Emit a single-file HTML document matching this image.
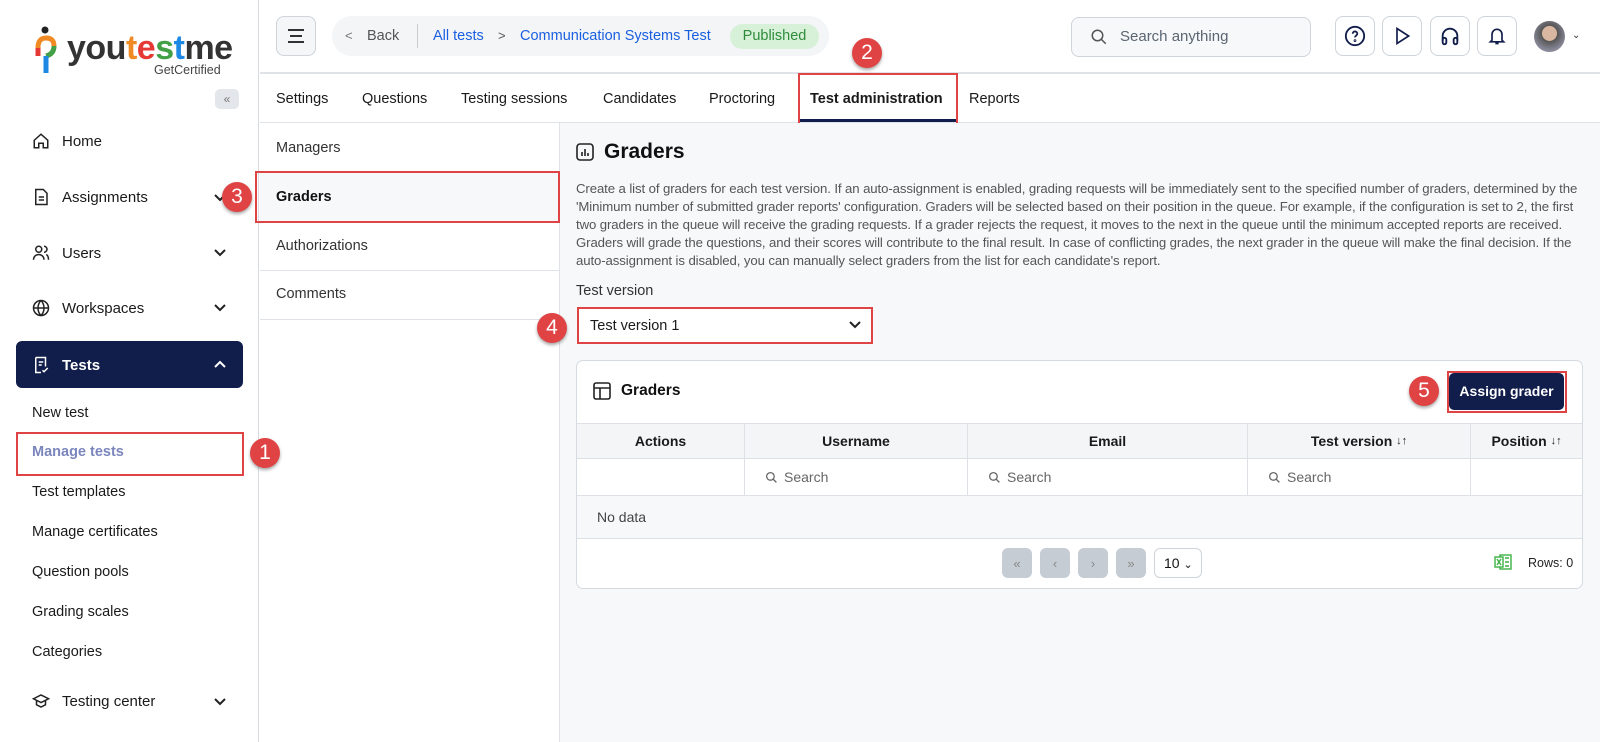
<!DOCTYPE html>
<html><head><meta charset="utf-8"><style>
*{box-sizing:border-box;margin:0;padding:0}
body{width:1600px;height:742px;overflow:hidden;font-family:"Liberation Sans",sans-serif;color:#111;background:#fff;position:relative}
.abs{position:absolute}
.side{left:0;top:0;width:259px;height:742px;border-right:1px solid #d8dce2;background:#fff}
.mi{position:absolute;left:32px;font-size:15px;color:#1a1a1a;display:flex;align-items:center}
.mi svg{margin-right:12px}
.chev{position:absolute;left:212px}
.sub{position:absolute;left:32px;font-size:14.5px;color:#1a1a1a}
.badge{position:absolute;width:30px;height:30px;border-radius:50%;background:#e04343;color:#fff;font-size:21px;text-align:center;line-height:30px;box-shadow:0 2px 3px rgba(0,0,0,.35)}
.red{position:absolute;border:2px solid #e04343}
.ibtn{position:absolute;top:16px;width:40px;height:40px;border:1px solid #cfd4da;border-radius:8px;display:flex;align-items:center;justify-content:center;background:#fff}
.tab{position:absolute;top:91px;font-size:14.5px;color:#1a1a1a}
.sm{position:absolute;left:276px;font-size:14.5px;color:#333}
.desc{position:absolute;left:576px;top:180px;font-size:13.2px;color:#555;line-height:18px;white-space:nowrap;letter-spacing:-.1px}
.th{position:absolute;top:423px;height:36px;border-right:1px solid #dde1e6;font-size:14px;font-weight:bold;display:flex;align-items:center;justify-content:center;color:#1a1a1a}
.fs{position:absolute;top:459px;height:36px;border-right:1px solid #dde1e6;font-size:14px;color:#666;display:flex;align-items:center;padding-left:20px}
.fs svg{margin-right:6px}
.pb{position:absolute;top:548px;width:30px;height:30px;border-radius:6px;background:#c5ccd4;color:#888;font-size:13px;display:flex;align-items:center;justify-content:center}
</style></head><body>

<div class="abs side"></div>
<svg class="abs" style="left:34px;top:26px" width="30" height="52" viewBox="0 0 30 52"><circle cx="11" cy="4" r="3.5" fill="#222"/><path d="M4 22 Q4 12 12 12 Q20 12 20 20" stroke="#f08a24" stroke-width="5" fill="none"/><path d="M4 22 L4 30" stroke="#e53935" stroke-width="5"/><path d="M20 20 Q20 28 12 30" stroke="#43a047" stroke-width="5" fill="none"/><path d="M12 30 L12 47" stroke="#1e88e5" stroke-width="5"/></svg>
<div class="abs" style="left:67px;top:28px;font-size:34px;font-weight:bold;letter-spacing:-.5px;color:#333;line-height:40px">you<span style="color:#f08a24">t</span><span style="color:#e53935">e</span><span style="color:#43a047">s</span><span style="color:#1e88e5">t</span>me</div>
<div class="abs" style="left:154px;top:63px;font-size:12.5px;color:#444">GetCertified</div>
<div class="abs" style="left:215px;top:89px;width:24px;height:20px;background:#e3e6ea;border-radius:5px;color:#777;font-size:12px;text-align:center;line-height:20px">«</div>

<div class="mi" style="top:132px"><svg width="18" height="18" viewBox="0 0 24 24" fill="none" stroke="#222" stroke-width="2"><path d="M3 11l9-8 9 8v10h-6v-6H9v6H3z"/></svg>Home</div>
<div class="mi" style="top:188px"><svg width="18" height="18" viewBox="0 0 24 24" fill="none" stroke="#222" stroke-width="2"><path d="M5 2h10l5 5v15H5z M9 12h7 M9 16h7"/></svg>Assignments</div>
<div class="mi" style="top:244px"><svg width="18" height="18" viewBox="0 0 24 24" fill="none" stroke="#222" stroke-width="2"><circle cx="9" cy="7" r="4"/><path d="M2 21c0-4 3-7 7-7s7 3 7 7 M16 3a4 4 0 010 8 M19 14c2 1 3 4 3 7"/></svg>Users</div>
<div class="chev" style="top:244px"><svg width="16" height="16" viewBox="0 0 16 16" fill="none" stroke="#222" stroke-width="2"><path d="M3 6l5 5 5-5"/></svg></div>
<div class="mi" style="top:299px"><svg width="18" height="18" viewBox="0 0 24 24" fill="none" stroke="#222" stroke-width="2"><circle cx="12" cy="12" r="10"/><path d="M2 12h20 M12 2c3 3 4 7 4 10s-1 7-4 10c-3-3-4-7-4-10s1-7 4-10"/></svg>Workspaces</div>
<div class="chev" style="top:299px"><svg width="16" height="16" viewBox="0 0 16 16" fill="none" stroke="#222" stroke-width="2"><path d="M3 6l5 5 5-5"/></svg></div>
<div class="abs" style="left:16px;top:341px;width:227px;height:47px;background:#111d4a;border-radius:6px"></div>
<div class="mi" style="top:356px;color:#fff;font-weight:bold"><svg width="18" height="18" viewBox="0 0 24 24" fill="none" stroke="#fff" stroke-width="2"><path d="M5 2h13v12 M5 2v20h7 M9 8h6 M9 12h4 M14 19l2 2 5-5"/></svg>Tests</div>
<div class="chev" style="top:356px"><svg width="16" height="16" viewBox="0 0 16 16" fill="none" stroke="#fff" stroke-width="2"><path d="M3 11l5-5 5 5"/></svg></div>
<div class="sub" style="top:405px">New test</div>
<div class="sub" style="top:444px;color:#7b86bd;font-weight:bold">Manage tests</div>
<div class="red" style="left:16px;top:432px;width:228px;height:44px"></div>
<div class="sub" style="top:484px">Test templates</div>
<div class="sub" style="top:524px">Manage certificates</div>
<div class="sub" style="top:564px">Question pools</div>
<div class="sub" style="top:604px">Grading scales</div>
<div class="sub" style="top:644px">Categories</div>
<div class="mi" style="top:692px"><svg width="18" height="18" viewBox="0 0 24 24" fill="none" stroke="#222" stroke-width="2"><path d="M2 9l10-5 10 5-10 5z M6 11v6l6 3 6-3v-6"/></svg>Testing center</div>
<div class="chev" style="top:693px"><svg width="16" height="16" viewBox="0 0 16 16" fill="none" stroke="#222" stroke-width="2"><path d="M3 6l5 5 5-5"/></svg></div>
<div class="chev" style="top:189px"><svg width="16" height="16" viewBox="0 0 16 16" fill="none" stroke="#222" stroke-width="2"><path d="M3 6l5 5 5-5"/></svg></div>

<div class="abs" style="left:260px;top:72px;width:1340px;height:2px;background:#dfe3e8"></div>
<div class="ibtn" style="left:276px;background:#f5f6f8"><svg width="20" height="16" viewBox="0 0 20 16" stroke="#333" stroke-width="2"><path d="M2 2h16 M4 8h12 M2 14h16"/></svg></div>
<div class="abs" style="left:332px;top:16px;width:497px;height:40px;border-radius:20px;background:#f3f5f7"></div>
<div class="abs" style="left:345px;top:28px;font-size:13px;color:#777">&lt;</div>
<div class="abs" style="left:367px;top:28px;font-size:14.5px;color:#555">Back</div>
<div class="abs" style="left:417px;top:24px;width:1px;height:24px;background:#ccc"></div>
<div class="abs" style="left:433px;top:28px;font-size:14.5px;color:#1a5fe0">All tests</div>
<div class="abs" style="left:498px;top:28px;font-size:13px;color:#555">&gt;</div>
<div class="abs" style="left:520px;top:28px;font-size:14.5px;color:#1a5fe0">Communication Systems Test</div>
<div class="abs" style="left:730px;top:24px;width:89px;height:25px;border-radius:13px;background:#d7f1d9;color:#2e8b3b;font-size:14.5px;text-align:center;line-height:25px">Published</div>
<div class="abs" style="left:1071px;top:17px;width:240px;height:40px;border:1px solid #cfd4da;border-radius:8px;background:#f7f8fa"></div>
<svg class="abs" style="left:1090px;top:28px" width="18" height="18" viewBox="0 0 24 24" fill="none" stroke="#555" stroke-width="2"><circle cx="10" cy="10" r="7"/><path d="M15 15l6 6"/></svg>
<div class="abs" style="left:1120px;top:28px;font-size:15px;color:#5a6572">Search anything</div>
<div class="ibtn" style="left:1335px"><svg width="22" height="22" viewBox="0 0 24 24" fill="none" stroke="#111d4a" stroke-width="2"><circle cx="12" cy="12" r="10"/><path d="M9.5 9.5a2.5 2.5 0 115 0c0 2-2.5 2-2.5 4"/><circle cx="12" cy="17" r=".5"/></svg></div>
<div class="ibtn" style="left:1382px"><svg width="20" height="22" viewBox="0 0 24 24" fill="none" stroke="#111d4a" stroke-width="2"><path d="M6 3l14 9-14 9z"/></svg></div>
<div class="ibtn" style="left:1430px"><svg width="22" height="22" viewBox="0 0 24 24" fill="none" stroke="#111d4a" stroke-width="2"><path d="M4 17v-5a8 8 0 0116 0v5"/><rect x="4" y="14" width="4" height="7" rx="2"/><rect x="16" y="14" width="4" height="7" rx="2"/></svg></div>
<div class="ibtn" style="left:1477px"><svg width="20" height="22" viewBox="0 0 24 24" fill="none" stroke="#111d4a" stroke-width="2"><path d="M6 17V10a6 6 0 0112 0v7l2 2H4z M10 21h4"/></svg></div>
<div class="abs" style="left:1534px;top:21px;width:31px;height:31px;border-radius:50%;background:radial-gradient(circle at 50% 40%,#d9b7a0 0 30%,#555 32%,#889 70%)"></div>
<div class="abs" style="left:1572px;top:30px;font-size:10px;color:#333">⌄</div>

<div class="abs" style="left:260px;top:122px;width:1340px;height:1px;background:#dfe3e8"></div>
<div class="tab" style="left:276px">Settings</div>
<div class="tab" style="left:362px">Questions</div>
<div class="tab" style="left:461px">Testing sessions</div>
<div class="tab" style="left:603px">Candidates</div>
<div class="tab" style="left:709px">Proctoring</div>
<div class="tab" style="left:810px;font-weight:bold">Test administration</div>
<div class="abs" style="left:800px;top:119px;width:156px;height:3px;background:#111d4a"></div>
<div class="red" style="left:798px;top:73px;width:160px;height:52px"></div>
<div class="tab" style="left:969px">Reports</div>

<div class="abs" style="left:559px;top:123px;width:1041px;height:619px;background:#f7f8fa;border-left:1px solid #dfe3e8"></div>
<div class="sm" style="top:140px">Managers</div>
<div class="abs" style="left:260px;top:172px;width:299px;height:1px;background:#dfe3e8"></div>
<div class="abs" style="left:260px;top:173px;width:299px;height:48px;background:#f7f8fa"></div>
<div class="sm" style="top:189px;font-weight:bold;color:#111">Graders</div>
<div class="red" style="left:255px;top:171px;width:305px;height:52px"></div>
<div class="sm" style="top:238px">Authorizations</div>
<div class="abs" style="left:260px;top:270px;width:299px;height:1px;background:#dfe3e8"></div>
<div class="sm" style="top:286px">Comments</div>
<div class="abs" style="left:260px;top:319px;width:299px;height:1px;background:#dfe3e8"></div>

<svg class="abs" style="left:576px;top:143px" width="18" height="18" viewBox="0 0 18 18" fill="none" stroke="#222" stroke-width="1.6"><rect x="1" y="1" width="16" height="16" rx="3"/><path d="M6 13V9 M9 13V6 M12 13v-3"/></svg>
<div class="abs" style="left:604px;top:140px;font-size:21px;font-weight:bold;color:#111">Graders</div>
<div class="desc">Create a list of graders for each test version. If an auto-assignment is enabled, grading requests will be immediately sent to the specified number of graders, determined by the<br>'Minimum number of submitted grader reports' configuration. Graders will be selected based on their position in the queue. For example, if the configuration is set to 2, the first<br>two graders in the queue will receive the grading requests. If a grader rejects the request, it moves to the next in the queue until the minimum accepted reports are received.<br>Graders will grade the questions, and their scores will contribute to the final result. In case of conflicting grades, the next grader in the queue will make the final decision. If the<br>auto-assignment is disabled, you can manually select graders from the list for each candidate's report.</div>
<div class="abs" style="left:576px;top:283px;font-size:14.5px;color:#333">Test version</div>
<div class="abs" style="left:577px;top:307px;width:296px;height:37px;background:#fff;border:2px solid #e04343"></div>
<div class="abs" style="left:590px;top:318px;font-size:14.5px;color:#1a1a1a">Test version 1</div>
<svg class="abs" style="left:848px;top:319px" width="14" height="12" viewBox="0 0 14 12" fill="none" stroke="#222" stroke-width="2"><path d="M2 3l5 5 5-5"/></svg>

<div class="abs" style="left:576px;top:360px;width:1007px;height:229px;background:#fff;border:1px solid #d6dbe1;border-radius:7px;overflow:hidden">
  <div class="abs" style="left:0;top:62px;width:1007px;height:36px;background:#f3f5f7;border-top:1px solid #dde1e6;border-bottom:1px solid #dde1e6"></div>
  <div class="abs" style="left:0;top:134px;width:1007px;height:44px;background:#f7f8fa;border-top:1px solid #dde1e6;border-bottom:1px solid #dde1e6"></div>
</div>
<svg class="abs" style="left:593px;top:382px" width="18" height="18" viewBox="0 0 18 18" fill="none" stroke="#222" stroke-width="1.6"><rect x="1" y="1" width="16" height="16" rx="2"/><path d="M1 6h16 M7 6v11"/></svg>
<div class="abs" style="left:621px;top:382px;font-size:15.5px;font-weight:bold">Graders</div>
<div class="abs" style="left:1449px;top:373px;width:115px;height:37px;background:#111d4a;border-radius:5px;color:#fff;font-size:14px;font-weight:bold;text-align:center;line-height:37px">Assign grader</div>
<div class="red" style="left:1447px;top:371px;width:120px;height:42px"></div>

<div class="th" style="left:577px;width:168px">Actions</div>
<div class="th" style="left:745px;width:223px">Username</div>
<div class="th" style="left:968px;width:280px">Email</div>
<div class="th" style="left:1248px;width:223px">Test version&nbsp;<span style="font-size:11px;font-weight:normal">↓↑</span></div>
<div class="th" style="left:1471px;width:111px;border-right:none">Position&nbsp;<span style="font-size:11px;font-weight:normal">↓↑</span></div>
<div class="fs" style="left:577px;width:168px"></div>
<div class="fs" style="left:745px;width:223px"><svg width="13" height="13" viewBox="0 0 24 24" fill="none" stroke="#666" stroke-width="2.4"><circle cx="10" cy="10" r="7"/><path d="M15 15l6 6"/></svg>Search</div>
<div class="fs" style="left:968px;width:280px"><svg width="13" height="13" viewBox="0 0 24 24" fill="none" stroke="#666" stroke-width="2.4"><circle cx="10" cy="10" r="7"/><path d="M15 15l6 6"/></svg>Search</div>
<div class="fs" style="left:1248px;width:223px"><svg width="13" height="13" viewBox="0 0 24 24" fill="none" stroke="#666" stroke-width="2.4"><circle cx="10" cy="10" r="7"/><path d="M15 15l6 6"/></svg>Search</div>
<div class="abs" style="left:597px;top:509px;font-size:14px;color:#444">No data</div>

<div class="pb" style="left:1002px">«</div>
<div class="pb" style="left:1040px">‹</div>
<div class="pb" style="left:1078px">›</div>
<div class="pb" style="left:1116px">»</div>
<div class="abs" style="left:1154px;top:548px;width:48px;height:30px;border:1px solid #cfd4da;border-radius:6px;background:#fff;font-size:14px;padding:6px 0 0 9px">10 <span style="font-size:11px">⌄</span></div>
<svg class="abs" style="left:1494px;top:553px" width="18" height="18" viewBox="0 0 18 18" fill="none" stroke="#3cb043" stroke-width="1.4"><rect x="6" y="2" width="11" height="14"/><rect x="1" y="4" width="8" height="10" fill="#fff"/><path d="M3 6l4 6 M7 6l-4 6 M11 5h4 M11 9h4 M11 13h4"/></svg>
<div class="abs" style="left:1528px;top:556px;font-size:12.5px;color:#222">Rows: 0</div>

<div class="badge" style="left:250px;top:438px">1</div>
<div class="badge" style="left:852px;top:38px">2</div>
<div class="badge" style="left:222px;top:182px">3</div>
<div class="badge" style="left:537px;top:313px">4</div>
<div class="badge" style="left:1409px;top:376px">5</div>
</body></html>
